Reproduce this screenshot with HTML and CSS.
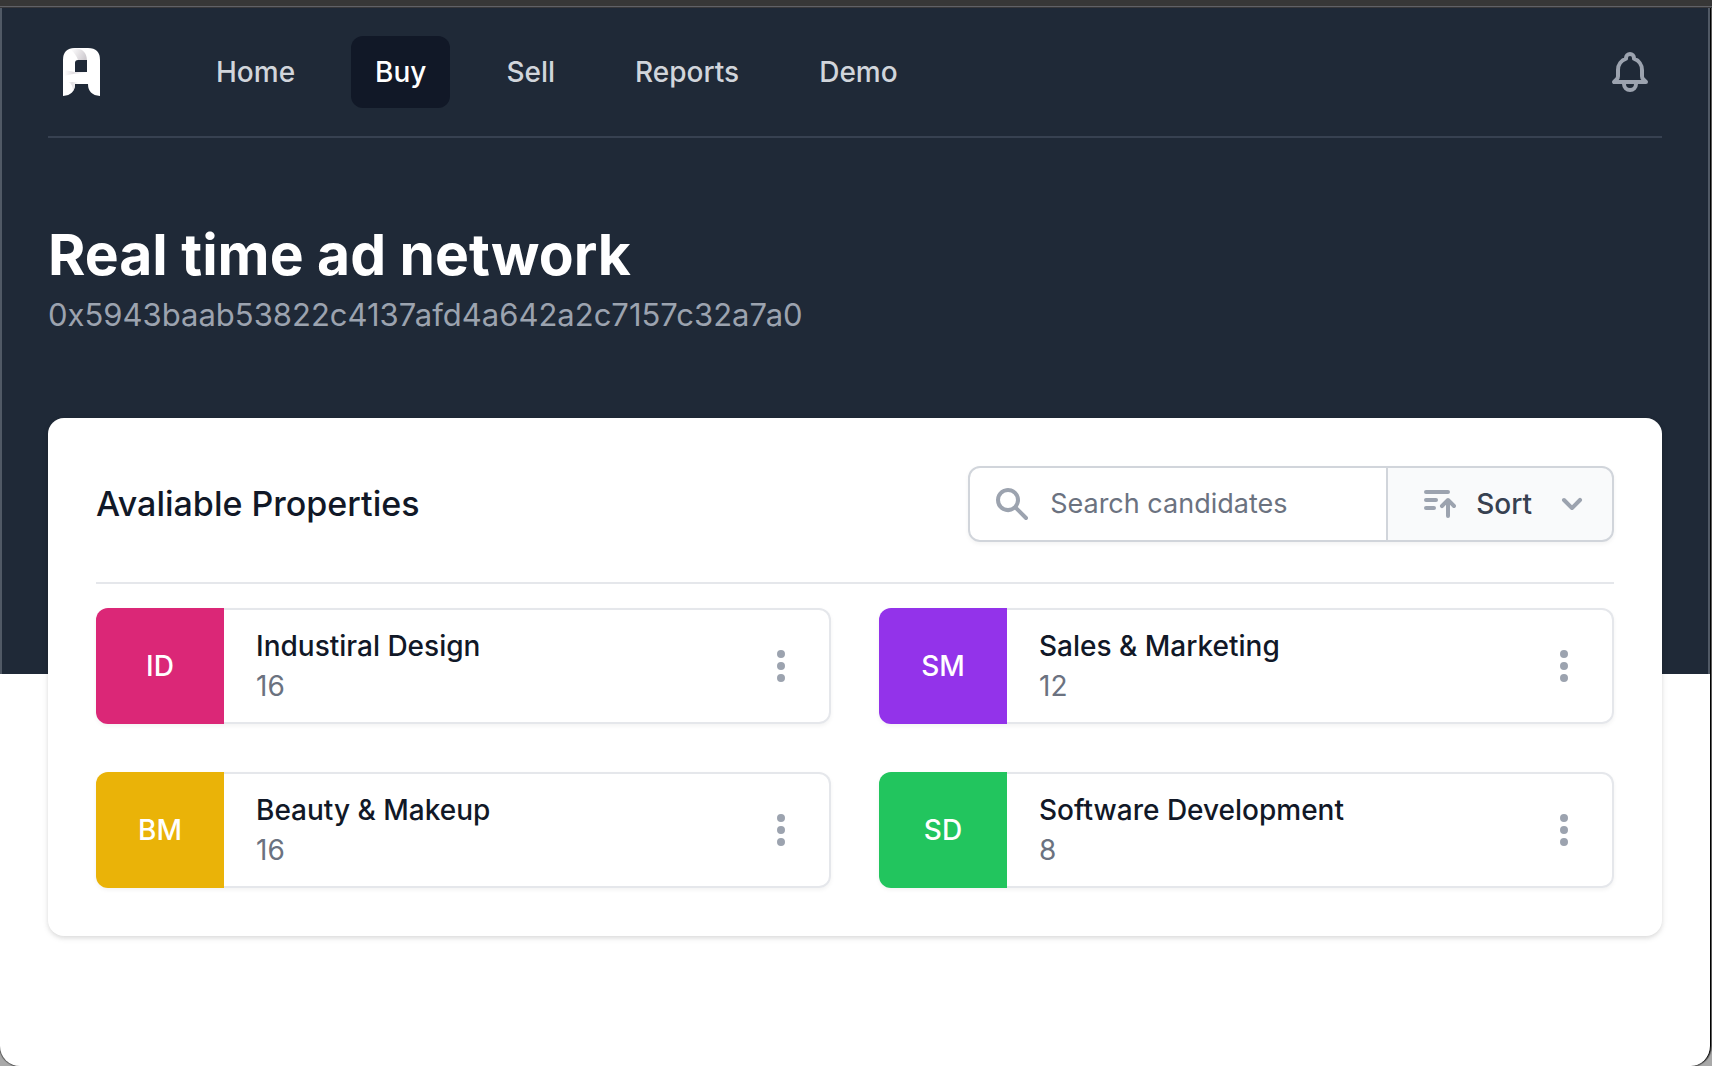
FILE: index.html
```html
<!DOCTYPE html>
<html lang="en">
<head>
<meta charset="utf-8">
<title>Real time ad network</title>
<link rel="stylesheet" href="styles.css">
</head>
<body>
<div class="titlebar"></div>
<div class="window">
  <div class="hero">
    <nav class="nav">
      <a class="logo" href="#" aria-label="Homepage">
        <svg viewBox="0 0 64 64" aria-hidden="true">
          <defs>
            <linearGradient id="fold" x1="0" y1="0.2" x2="1" y2="0.6">
              <stop offset="0" stop-color="#fff"/>
              <stop offset="1" stop-color="#cfcbd0"/>
            </linearGradient>
            <linearGradient id="bar" x1="0" y1="0" x2="1" y2="0">
              <stop offset="0" stop-color="#fff"/>
              <stop offset="0.4" stop-color="#e2dfe3"/>
              <stop offset="1" stop-color="#fff"/>
            </linearGradient>
          </defs>
          <path fill="#fff" fill-rule="evenodd" d="M15 56V20Q15 8 27 8H40Q52 8 52 20V56Q40 55 40 44H27Q27 55 15 56ZM27 32H39V20H30Q27 20 27 23Z"/>
          <path fill="url(#fold)" d="M22 9Q38 6 39 20H30Q28 14 22 9Z"/>
          <path fill="url(#bar)" d="M16 30L27 32H39V33Q26 33 16 36Z"/>
          <path fill="url(#bar)" d="M20 42L30 42V44H27Q27 48 25 51Q25 44 20 42Z"/>
        </svg>
      </a>
      <div class="links">
        <a class="link" href="#">Home</a>
        <a class="link current" href="#" aria-current="page">Buy</a>
        <a class="link" href="#">Sell</a>
        <a class="link" href="#">Reports</a>
        <a class="link" href="#">Demo</a>
      </div>
      <button class="bell" type="button" aria-label="View notifications">
        <svg viewBox="0 0 24 24" aria-hidden="true"><path fill="none" stroke="currentColor" stroke-width="2" stroke-linecap="round" stroke-linejoin="round" d="M15 17h5l-1.405-1.405A2.032 2.032 0 0118 14.158V11a6.002 6.002 0 00-4-5.659V5a2 2 0 10-4 0v.341C7.670 6.165 6 8.388 6 11v3.159c0 .538-.214 1.055-.595 1.436L4 17h5m6 0v1a3 3 0 11-6 0v-1m6 0H9"/></svg>
      </button>
    </nav>
    <header class="heading">
      <h1>Real time ad network</h1>
      <p>0x5943baab53822c4137afd4a642a2c7157c32a7a0</p>
    </header>
  </div>
  <main class="main">
    <section class="panel">
      <div class="panel-head">
        <h2>Avaliable Properties</h2>
        <form class="tools">
          <label class="search">
            <svg viewBox="0 0 20 20" aria-hidden="true"><path fill="currentColor" fill-rule="evenodd" d="M8 4a4 4 0 100 8 4 4 0 000-8zM2 8a6 6 0 1110.89 3.476l4.817 4.817a1 1 0 01-1.414 1.414l-4.816-4.816A6 6 0 012 8z"/></svg>
            <input type="text" placeholder="Search candidates" aria-label="Search candidates">
          </label>
          <button class="sort" type="button">
            <svg viewBox="0 0 20 20" aria-hidden="true"><path fill="currentColor" d="M3 3a1 1 0 000 2h11a1 1 0 100-2H3zM3 7a1 1 0 000 2h5a1 1 0 000-2H3zM3 11a1 1 0 100 2h4a1 1 0 100-2H3zM13 16a1 1 0 102 0v-5.586l1.293 1.293a1 1 0 001.414-1.414l-3-3a1 1 0 00-1.414 0l-3 3a1 1 0 101.414 1.414L13 10.414V16z"/></svg>
            <span>Sort</span>
            <svg viewBox="0 0 20 20" aria-hidden="true"><path fill="currentColor" fill-rule="evenodd" d="M5.293 7.293a1 1 0 011.414 0L10 10.586l3.293-3.293a1 1 0 111.414 1.414l-4 4a1 1 0 01-1.414 0l-4-4a1 1 0 010-1.414z"/></svg>
          </button>
        </form>
      </div>
      <ul class="grid">
        <li class="item">
          <div class="badge pink">ID</div>
          <div class="body">
            <div class="text"><a href="#">Industiral Design</a><p>16</p></div>
            <button class="more" type="button" aria-label="Open options"><svg viewBox="0 0 20 20" aria-hidden="true"><path fill="currentColor" d="M10 6a2 2 0 110-4 2 2 0 010 4zM10 12a2 2 0 110-4 2 2 0 010 4zM10 18a2 2 0 110-4 2 2 0 010 4z"/></svg></button>
          </div>
        </li>
        <li class="item">
          <div class="badge purple">SM</div>
          <div class="body">
            <div class="text"><a href="#">Sales &amp; Marketing</a><p>12</p></div>
            <button class="more" type="button" aria-label="Open options"><svg viewBox="0 0 20 20" aria-hidden="true"><path fill="currentColor" d="M10 6a2 2 0 110-4 2 2 0 010 4zM10 12a2 2 0 110-4 2 2 0 010 4zM10 18a2 2 0 110-4 2 2 0 010 4z"/></svg></button>
          </div>
        </li>
        <li class="item">
          <div class="badge yellow">BM</div>
          <div class="body">
            <div class="text"><a href="#">Beauty &amp; Makeup</a><p>16</p></div>
            <button class="more" type="button" aria-label="Open options"><svg viewBox="0 0 20 20" aria-hidden="true"><path fill="currentColor" d="M10 6a2 2 0 110-4 2 2 0 010 4zM10 12a2 2 0 110-4 2 2 0 010 4zM10 18a2 2 0 110-4 2 2 0 010 4z"/></svg></button>
          </div>
        </li>
        <li class="item">
          <div class="badge green">SD</div>
          <div class="body">
            <div class="text"><a href="#">Software Development</a><p>8</p></div>
            <button class="more" type="button" aria-label="Open options"><svg viewBox="0 0 20 20" aria-hidden="true"><path fill="currentColor" d="M10 6a2 2 0 110-4 2 2 0 010 4zM10 12a2 2 0 110-4 2 2 0 010 4zM10 18a2 2 0 110-4 2 2 0 010 4z"/></svg></button>
          </div>
        </li>
      </ul>
    </section>
  </main>
</div>
</body>
</html>
```

FILE: styles.css
```css
*, *::before, *::after { box-sizing: border-box; }
body, h1, h2, p, ul { margin: 0; padding: 0; }
body {
  min-height: 100vh;
  display: flex;
  flex-direction: column;
  background: #a9a9a9;
  font-family: Inter, "Liberation Sans", sans-serif;
  font-size: 28px;
  line-height: 40px;
  color: #111827;
}
a { color: inherit; text-decoration: none; }
button, input { font: inherit; }
button { border: 0; background: none; padding: 0; cursor: pointer; }
svg { display: block; flex: none; }

.titlebar { height: 8px; background: #373737; border-bottom: 2px solid #66676c; }
.window {
  flex: 1;
  margin-right: 1px;
  background: #fff;
  border-right: 1px solid #000;
  border-radius: 0 0 20px 20px;
  box-shadow: 0 0 1px 1px rgba(0, 0, 0, .5);
}

.hero {
  background: #1f2937;
  border: solid #505965;
  border-width: 0 2px;
  padding: 0 46px 256px;
}
.nav {
  display: flex;
  align-items: center;
  height: 130px;
  border-bottom: 2px solid #374151;
}
.logo svg { width: 64px; height: 64px; }
.links { display: flex; gap: 32px; margin-left: 80px; flex: 1; }
.link { padding: 16px 24px; border-radius: 12px; font-weight: 500; color: #d1d5db; }
.link.current { background: #111827; color: #fff; }
.bell { padding: 8px; color: #9ca3af; }
.bell svg { width: 48px; height: 48px; }

.heading { padding: 80px 0; }
h1 { font-size: 57px; line-height: 74px; font-weight: 700; color: #fff; }
.heading p { font-size: 31px; line-height: 46px; color: #9ca3af; }

.main { margin-top: -256px; padding: 0 48px 96px; }
.panel {
  background: #fff;
  border-radius: 16px;
  padding: 48px;
  box-shadow: 0 2px 6px rgba(0, 0, 0, .1), 0 2px 4px rgba(0, 0, 0, .06);
}
.panel-head {
  display: flex;
  align-items: center;
  justify-content: space-between;
  padding-bottom: 40px;
  border-bottom: 2px solid #e5e7eb;
}
h2 { font-size: 34px; line-height: 48px; font-weight: 500; }
.tools { display: flex; border-radius: 12px; box-shadow: 0 2px 4px rgba(0, 0, 0, .05); }
.search {
  display: flex;
  align-items: center;
  gap: 18px;
  width: 420px;
  height: 76px;
  padding-left: 22px;
  border: 2px solid #d1d5db;
  border-radius: 12px 0 0 12px;
  color: #9ca3af;
}
.search svg, .sort svg, .more svg { width: 40px; height: 40px; }
.search input { flex: 1; min-width: 0; border: 0; padding: 0; outline: 0; background: none; color: #111827; font-size: 27px; }
.search input::placeholder { color: #6b7280; opacity: 1; }
.sort {
  display: flex;
  align-items: center;
  gap: 16px;
  margin-left: -2px;
  padding: 0 20px 0 32px;
  border: 2px solid #d1d5db;
  border-radius: 0 12px 12px 0;
  background: #f9fafb;
  color: #9ca3af;
  font-weight: 500;
}
.sort span { color: #374151; margin-right: 4px; }

.grid {
  list-style: none;
  display: grid;
  grid-template-columns: 1fr 1fr;
  gap: 48px;
  margin-top: 24px;
}
.item { display: flex; border-radius: 12px; box-shadow: 0 2px 4px rgba(0, 0, 0, .05); }
.badge {
  display: flex;
  align-items: center;
  justify-content: center;
  width: 128px;
  border-radius: 12px 0 0 12px;
  font-weight: 500;
  color: #fff;
}
.pink { background: #db2777; }
.purple { background: #9333ea; }
.yellow { background: #eab308; }
.green { background: #22c55e; }
.body {
  flex: 1;
  display: flex;
  align-items: center;
  justify-content: space-between;
  border: 2px solid #e5e7eb;
  border-left: 0;
  border-radius: 0 12px 12px 0;
}
.text { padding: 16px 32px; }
.text a { font-weight: 500; }
.text p { color: #6b7280; }
.more { padding: 12px; margin-right: 16px; color: #9ca3af; }
```
